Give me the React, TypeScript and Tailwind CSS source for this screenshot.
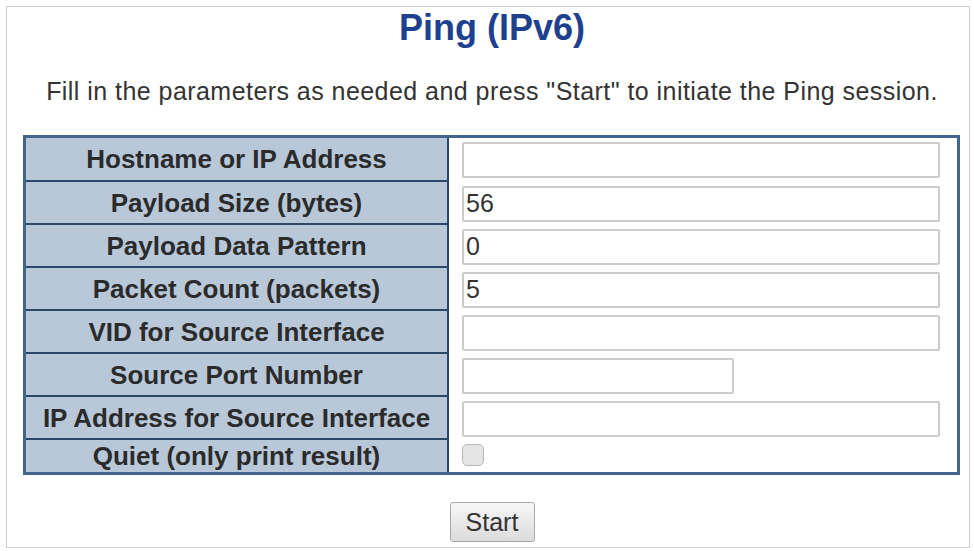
import React from 'react';

type Field = {
    label: string;
    value?: string;
    kind: 'text' | 'short' | 'check';
    h: string;
};

const FIELDS: Field[] = [
    { label: 'Hostname or IP Address', kind: 'text', value: '', h: 'h-[44px]' },
    { label: 'Payload Size (bytes)', kind: 'text', value: '56', h: 'h-[43px]' },
    { label: 'Payload Data Pattern', kind: 'text', value: '0', h: 'h-[43px]' },
    { label: 'Packet Count (packets)', kind: 'text', value: '5', h: 'h-[43px]' },
    { label: 'VID for Source Interface', kind: 'text', value: '', h: 'h-[43px]' },
    { label: 'Source Port Number', kind: 'short', value: '', h: 'h-[43px]' },
    { label: 'IP Address for Source Interface', kind: 'text', value: '', h: 'h-[43px]' },
    { label: 'Quiet (only print result)', kind: 'check', h: 'h-[32px]' },
];

function Row({ field, last }: { field: Field; last: boolean }) {
    return (
        <div className={`flex ${field.h}`}>
            <div
                className={`w-[423px] shrink-0 bg-[#b8c8d9] border-r-2 border-[#2c4866] flex items-center justify-center text-[26px] font-bold text-[#2b2b2b] leading-none ${last ? '' : 'border-b-2'}`}
            >
                {field.label}
            </div>
            <div className="flex-1 bg-white flex items-center pl-[13px]">
                {field.kind === 'check' ? (
                    <span className="block w-[22px] h-[22px] mb-[3px] rounded-[5px] border border-[#b9b9b9] bg-[#e4e4e4]" />
                ) : (
                    <input
                        readOnly
                        value={field.value}
                        className={`${field.kind === 'short' ? 'w-[272px]' : 'w-[478px]'} h-[36px] border-2 border-[#cbcbcb] rounded-[2px] bg-white pl-[2px] text-[25px] text-[#333] outline-none`}
                        style={{ fontFamily: 'inherit' }}
                    />
                )}
            </div>
        </div>
    );
}

export default function App() {
    return (
        <div
            className="bg-white w-[974px] h-[551px] pt-[6px] pl-[6px]"
            style={{ fontFamily: '"Liberation Sans", Arial, sans-serif' }}
        >
            <div className="w-[964px] h-[542px] border border-[#cfcfcf] flex flex-col">
                <h1 className="pt-[1px] pl-[8px] text-center text-[36px] leading-[40px] font-bold text-[#1f3f8f]">
                    Ping (IPv6)
                </h1>
                <p className="mt-[28px] pl-[8px] text-center text-[25px] leading-[30px] tracking-[0.45px] text-[#333]">
                    Fill in the parameters as needed and press "Start" to initiate the Ping session.
                </p>

                {/* parameter table */}
                <div className="mt-[29px] ml-[16px] w-[937px] border-[3px] border-[#41658c] flex flex-col">
                    {FIELDS.map((f, i) => (
                        <Row key={f.label} field={f} last={i === FIELDS.length - 1} />
                    ))}
                </div>

                <div className="mt-[27px] pl-[8px] flex justify-center">
                    <button className="w-[85px] h-[40px] border border-[#a8a8a8] rounded-[3px] bg-gradient-to-b from-[#f7f7f7] to-[#dcdcdc] text-[25px] text-[#333] leading-none">
                        Start
                    </button>
                </div>
            </div>
        </div>
    );
}
